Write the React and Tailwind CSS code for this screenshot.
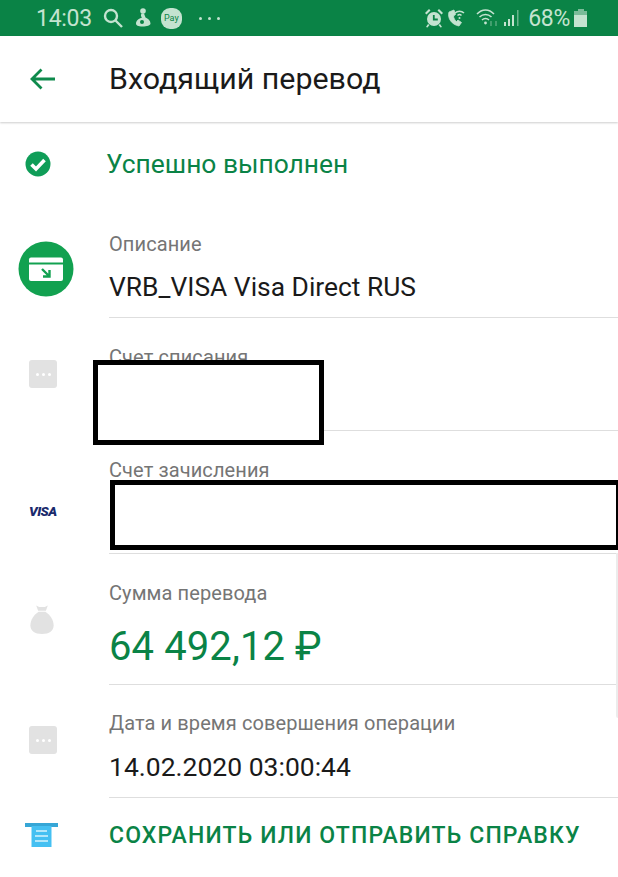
import React from "react";

const Dots = () => (
  <div className="w-[28px] h-[28px] rounded-[3px] bg-[#e2e2e2] flex items-center justify-center gap-[3px]">
    <span className="w-[3px] h-[3px] rounded-full bg-white" />
    <span className="w-[3px] h-[3px] rounded-full bg-white" />
    <span className="w-[3px] h-[3px] rounded-full bg-white" />
  </div>
);

function Row({ icon, label, rowClass, iconClass, bodyClass = "pt-[27px]", children }) {
  return (
    <div className={`flex ${rowClass}`}>
      <div className={`w-[109px] shrink-0 flex justify-start items-start ${iconClass}`}>{icon}</div>
      <div className={`flex-1 border-b border-[#dedede] ${bodyClass}`}>
        <div className="text-[20px] leading-[24px] tracking-[0.1px] text-[#757575]">{label}</div>
        {children}
      </div>
    </div>
  );
}

export default function App() {
  return (
    <div className="relative w-[618px] h-[877px] bg-white overflow-hidden font-['Roboto',sans-serif]">
      {/* status bar */}
      <div className="h-[36px] bg-[#0a8346] flex items-center justify-between pl-[36px] pr-[31px] text-[#c4e3d0]">
        <div className="flex items-center">
          <span className="text-[23px] leading-none tracking-[-0.3px]">14:03</span>
          <svg className="ml-[11px]" width="20" height="20" viewBox="0 0 20 20" fill="none" stroke="#c4e3d0" strokeWidth="2.400">
            <circle cx="8" cy="8" r="6" />
            <path d="M12.500 12.500 19 19" />
          </svg>
          <svg className="ml-[12px]" width="16" height="20" viewBox="0 0 16 20" fill="#c4e3d0">
            <circle cx="8" cy="3" r="2.800" />
            <path d="M6.500 5.500c-1 2-.5 3 .5 4-3 1-6 3-6 6 0 2 2 3 6.500 3s8-1 8-3c0-3-2.500-5-5-6L9 5.500z" />
            <circle cx="7" cy="14" r="2" fill="#0a8346" />
          </svg>
          <div className="ml-[10px] w-[21px] h-[21px] rounded-[9px] bg-[#c4e3d0] text-[#0a8346] text-[9px] leading-none flex items-center justify-center">Pay</div>
          <div className="ml-[17px] flex gap-[6px]">
            <span className="w-[3px] h-[3px] rounded-full bg-[#c4e3d0]" />
            <span className="w-[3px] h-[3px] rounded-full bg-[#c4e3d0]" />
            <span className="w-[3px] h-[3px] rounded-full bg-[#c4e3d0]" />
          </div>
        </div>
        <div className="flex items-center">
          <svg width="18" height="20" viewBox="0 0 18 20" fill="#c4e3d0">
            <circle cx="9" cy="11" r="7" />
            <path d="M0 5l4-4 1.500 1.500-4 4zM18 5l-4-4-1.500 1.500 4 4zM3 16l-2 3 1.500 .5 2-2.500zM15 16l2 3-1.500 .5-2-2.500z" />
            <path d="M8.800 7v4.500h4" fill="none" stroke="#0a8346" strokeWidth="1.800" />
          </svg>
          <svg className="ml-[4px]" width="18" height="20" viewBox="0 0 18 20" fill="none" stroke="#c4e3d0">
            <path d="M2 4c-2 6 3 13 10 14l2.500-3.500-3.500-2.500-1.500 1.500c-1.500-1-3-3.500-3-5.500l2-1.500L7 2z" fill="#c4e3d0" strokeWidth="0.800" />
            <path d="M8 5c2.500-2.500 6.500-2.500 9 0M10.500 7.500c1.200-1.200 2.800-1.200 4 0" strokeWidth="1.500" />
            <circle cx="12.500" cy="10" r="1" fill="#c4e3d0" stroke="none" />
          </svg>
          <svg className="ml-[11px]" width="22" height="20" viewBox="0 0 22 20" fill="none" stroke="#c4e3d0" strokeWidth="1.500">
            <path d="M1 6c5-5.500 12-5.500 17 0M3.500 9c3.500-3.500 8.500-3.500 12 0M6 12c2-2 5-2 7 0" />
            <circle cx="9.500" cy="15" r="1.400" fill="#c4e3d0" stroke="none" />
            <path d="M15 13v5M20 13v5" strokeWidth="1" opacity="0.6" />
          </svg>
          <svg className="ml-[6px]" width="15" height="20" viewBox="0 0 15 20" fill="#c4e3d0">
            <rect x="0" y="14" width="2" height="4" />
            <rect x="4" y="11" width="2" height="7" />
            <rect x="8" y="7" width="2" height="11" />
            <rect x="13" y="2" width="1.500" height="16" opacity="0.5" />
          </svg>
          <span className="ml-[9px] text-[23px] leading-none tracking-[-0.3px]">68%</span>
          <div className="ml-[4px] flex flex-col items-center">
            <span className="w-[6px] h-[2px] bg-[#c4e3d0] opacity-60" />
            <span className="w-[13px] h-[4px] bg-[#c4e3d0] opacity-60" />
            <span className="w-[13px] h-[12px] bg-[#c4e3d0]" />
          </div>
        </div>
      </div>

      {/* header */}
      <div className="relative h-[86px] flex items-center bg-white shadow-[0_1px_2px_rgba(0,0,0,0.2)]">
        <svg className="ml-[30px]" width="25" height="22" viewBox="0 0 25 22" fill="none" stroke="#0e8a4c" strokeWidth="2.800">
          <path d="M25 11H2M11.500 1.500 2 11l9.500 9.500" />
        </svg>
        <h1 className="ml-[54px] text-[30.400px] leading-none text-[#1a1a1a] font-normal">Входящий перевод</h1>
      </div>

      {/* status */}
      <div className="h-[84px] flex items-center">
        <div className="w-[106px] shrink-0 pl-[25px]">
          <svg width="26" height="26" viewBox="0 0 26 26">
            <circle cx="13" cy="13" r="12.500" fill="#0f9d58" />
            <path d="M6.500 13.500 11 18l8.500-9" fill="none" stroke="#fff" strokeWidth="3.600" />
          </svg>
        </div>
        <span className="text-[26.400px] leading-none text-[#0a8346]">Успешно выполнен</span>
      </div>

      {/* fields */}
      <div>
        <Row
          rowClass="h-[112px]"
          iconClass="pl-[18px] pt-[35px]"
          bodyClass="pt-[26px]"
          label="Описание"
          icon={
            <svg width="56" height="56" viewBox="0 0 56 56">
              <circle cx="28" cy="28" r="27.500" fill="#12a150" />
              <path d="M11 18.500a2 2 0 0 1 2-2h30a2 2 0 0 1 2 2v3H11z" fill="#fff" />
              <path d="M11 23.500h34V38a2 2 0 0 1-2 2H13a2 2 0 0 1-2-2z" fill="#fff" />
              <path d="M24 28l7 7M31.500 29v6.500H25" fill="none" stroke="#12a150" strokeWidth="2.400" />
            </svg>
          }
        >
          <div className="mt-[13px] text-[26.400px] leading-[36px] text-[#1a1a1a]">VRB_VISA Visa Direct RUS</div>
        </Row>
        <Row rowClass="h-[113px]" iconClass="pl-[29px] pt-[42px]" label="Счет списания" icon={<Dots />} />
        <Row
          rowClass="h-[123px]"
          iconClass="pl-[29px] pt-[74px]"
          label="Счет зачисления"
          icon={<span className="text-[13.500px] font-black italic leading-none tracking-[-0.5px] text-[#1a2a6c]">VISA</span>}
        />
        <Row
          rowClass="h-[131px]"
          iconClass="pl-[29px] pt-[50px]"
          label="Сумма перевода"
          icon={
            <svg width="26" height="31" viewBox="0 0 26 32" fill="#e2e2e2">
              <path d="M7 1.500 10 3h6l3-1.500L17 7H9z" />
              <path d="M9.500 8h7C21 11 25 16 25 22c0 6-4.500 9-12 9S1 28 1 22C1 16 5 11 9.500 8z" />
            </svg>
          }
        >
          <div className="mt-[18px] text-[40px] leading-[48px] tracking-[0.1px] text-[#0a8346]">64 492,12 ₽</div>
        </Row>
        <Row
          rowClass="h-[113px]"
          iconClass="pl-[29px] pt-[41px]"
          bodyClass="pt-[26px]"
          label="Дата и время совершения операции"
          icon={<Dots />}
        >
          <div className="mt-[14px] text-[26.500px] leading-[36px] text-[#1a1a1a]">14.02.2020 03:00:44</div>
        </Row>
      </div>

      {/* action */}
      <div className="flex items-center h-[74px]">
        <div className="w-[109px] shrink-0 pl-[25px]">
          <svg width="33" height="24" viewBox="0 0 33 24">
            <path d="M0 0h33v4H0z" fill="#36a6d6" />
            <path d="M6.500 3h20v21h-20z" fill="#45c0f2" />
            <path d="M11 8h11M10 13h13M10 18h13" stroke="#d8f3fd" strokeWidth="1.500" />
          </svg>
        </div>
        <span className="text-[23px] leading-none font-medium tracking-[1.130px] text-[#0a8346]">СОХРАНИТЬ ИЛИ ОТПРАВИТЬ СПРАВКУ</span>
      </div>

      {/* redaction boxes */}
      <div className="absolute left-[93px] top-[360px] w-[231px] h-[85px] border-[5px] border-black bg-white" />
      <div className="absolute left-[110px] top-[480px] w-[511px] h-[70px] border-[5px] border-black bg-white" />
      {/* faint scrollbar edge */}
      <div className="absolute right-0 top-[553px] w-[2px] h-[165px] rounded-bl-[2px] bg-[#ececec]" />
    </div>
  );
}
